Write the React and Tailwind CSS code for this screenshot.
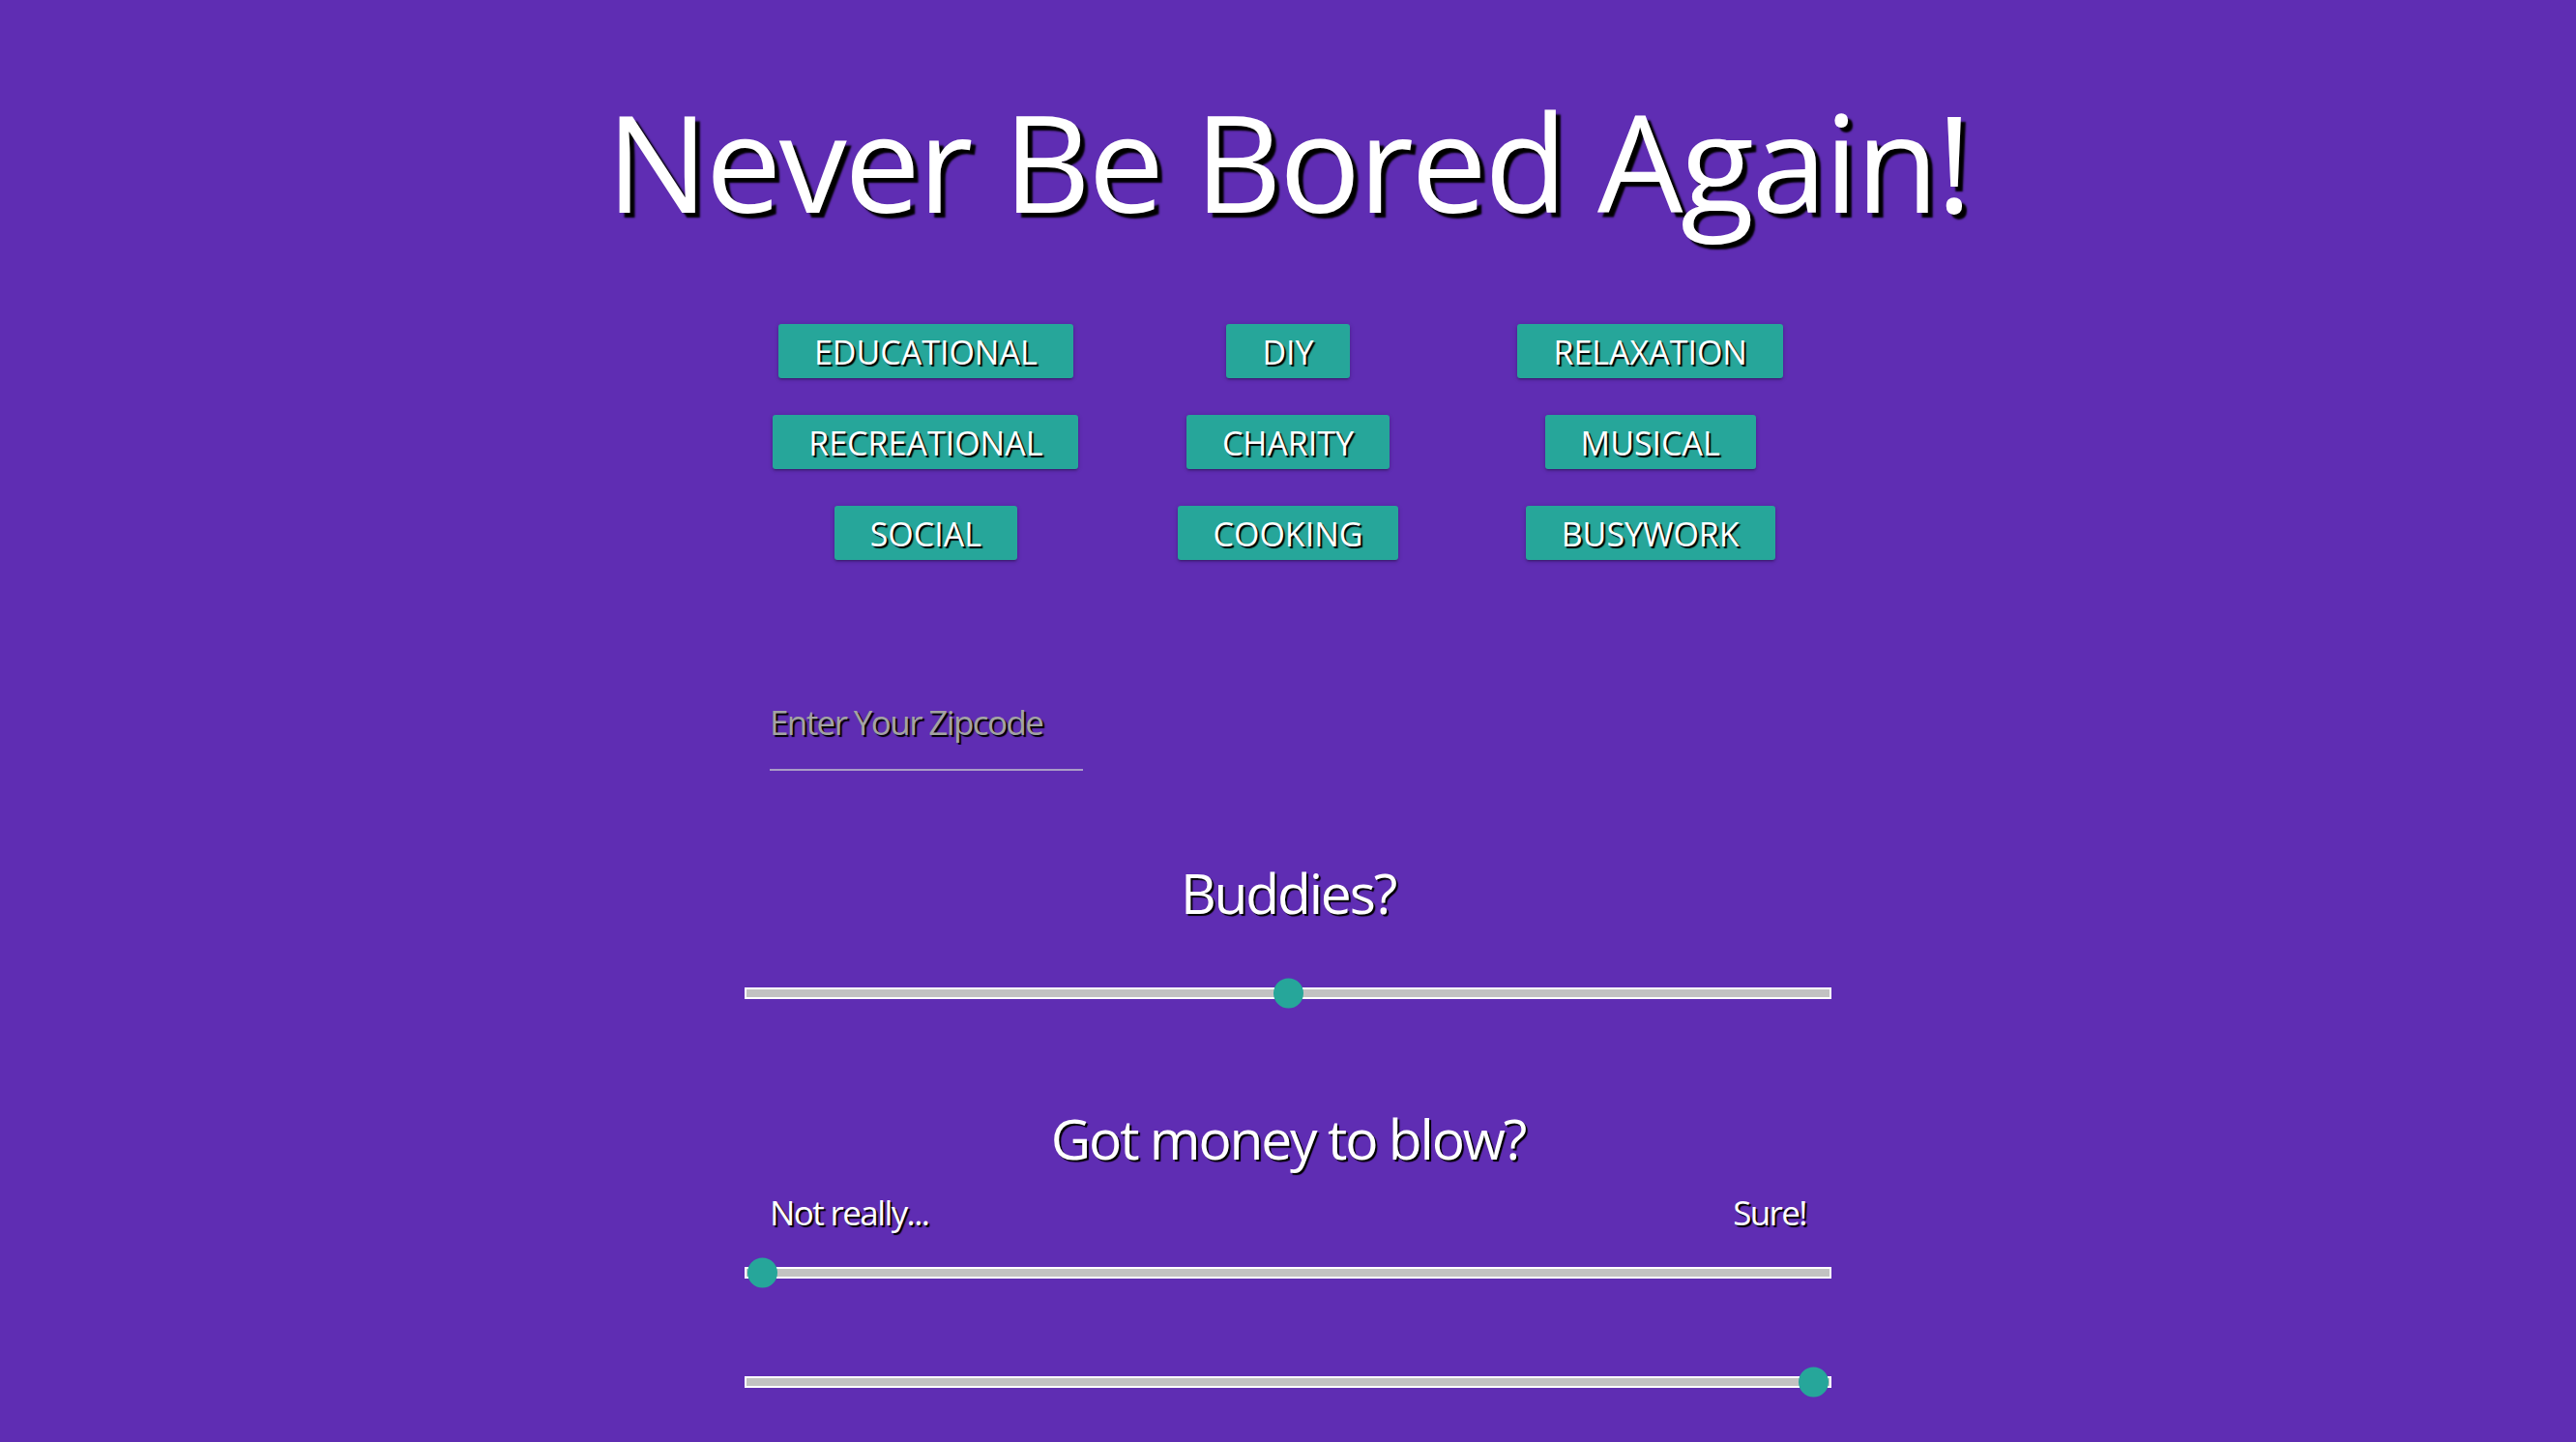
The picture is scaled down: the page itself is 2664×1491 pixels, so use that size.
import React from "react";

const categories = [
  "Educational",
  "DIY",
  "Relaxation",
  "Recreational",
  "Charity",
  "Musical",
  "Social",
  "Cooking",
  "Busywork",
];

function Slider({ pos }) {
  const thumbPos =
    pos === "start"
      ? "left-[1px]"
      : pos === "end"
      ? "right-[1px]"
      : "left-[calc(50%-15.5px)]";
  return (
    <div className="relative h-[12px] w-full border-2 border-white bg-[#c2c2c2]">
      <div
        className={`absolute top-1/2 h-[31px] w-[31px] -translate-y-1/2 rounded-full bg-[#26a69a] ${thumbPos}`}
      />
    </div>
  );
}

export default function App() {
  return (
    <div className="flex min-h-screen flex-col items-center bg-[#5f2db3] pb-[60px] font-['Open_Sans','Noto_Sans',sans-serif] text-white">
      <h1 className="mt-[96px] text-[140px] leading-[140px] font-normal tracking-[-2.6px] [text-shadow:5px_5px_2px_#000]">
        Never Be Bored Again!
      </h1>

      <div className="mt-[99px] grid w-[1124px] grid-cols-3 gap-y-[38px]">
        {categories.map((c) => (
          <div key={c} className="flex justify-center">
            <button className="h-[56px] rounded-[3px] bg-[#26a69a] px-[37px] pt-[2px] text-[34px] leading-[54px] uppercase text-white shadow-[0_2px_2px_0_rgba(0,0,0,0.14),0_3px_1px_-2px_rgba(0,0,0,0.12),0_1px_5px_0_rgba(0,0,0,0.2)] [text-shadow:2px_2px_1px_#000]">
              {c}
            </button>
          </div>
        ))}
      </div>

      <div className="mt-[138px] w-[1124px] px-[26px]">
        <input
          type="text"
          placeholder="Enter Your Zipcode"
          className="h-[80px] w-[324px] border-b-2 border-[#a99cc6] bg-transparent pb-[20px] text-[35px] tracking-[-1.6px] text-white outline-none placeholder:text-[#a3a3a3] [text-shadow:2px_2px_1px_#000]"
        />
      </div>

      <h2 className="mt-[98px] text-[57px] leading-[57px] tracking-[-2.2px] [text-shadow:2px_2px_1px_#000]">
        Buddies?
      </h2>
      <div className="mt-[69px] w-[1124px]">
        <Slider pos="middle" />
      </div>

      <h2 className="mt-[116px] text-[57px] leading-[57px] tracking-[-2.2px] [text-shadow:2px_2px_1px_#000]">
        Got money to blow?
      </h2>
      <div className="mt-[30px] flex w-[1124px] justify-between px-[26px] text-[35px] leading-[35px] tracking-[-1.6px] [text-shadow:2px_2px_1px_#000]">
        <span>Not really...</span>
        <span>Sure!</span>
      </div>
      <div className="mt-[39px] w-[1124px]">
        <Slider pos="start" />
      </div>
      <div className="mt-[101px] w-[1124px]">
        <Slider pos="end" />
      </div>
    </div>
  );
}
